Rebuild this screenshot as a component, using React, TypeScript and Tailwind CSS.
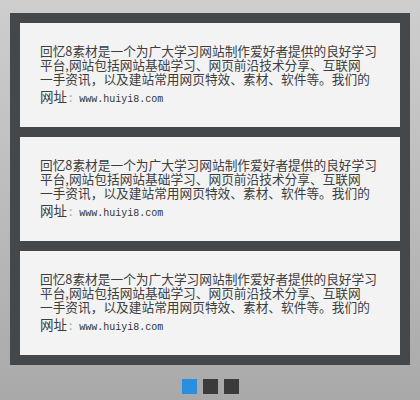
const LINES = [
  '回忆8素材是一个为广大学习网站制作爱好者提供的良好学习',
  '平台,网站包括网站基础学习、网页前沿技术分享、互联网',
  '一手资讯，以及建站常用网页特效、素材、软件等。我们的',
]

const CARDS = [1, 2, 3]

function Card() {
  return (
    <div className="h-[104px] bg-[#f3f3f3] pt-[21px] pl-5 text-[#3d3d3d] text-[12.7px] leading-[14px] font-['Noto_Sans_CJK_SC','Noto_Sans',sans-serif]">
      {LINES.map((l) => (
        <div key={l} className="whitespace-nowrap">{l}</div>
      ))}
      <div className="mt-[2px] whitespace-nowrap flex items-baseline leading-[16px]">
        <span className="text-[13.5px]">网址</span>
        <span className="text-[#9aa] text-[12px] ml-[2px] mr-[7px]">:</span>
        <span className="font-['Liberation_Mono',monospace] text-[10px] text-[#333]">www.huiyi8.com</span>
      </div>
    </div>
  )
}

export default function App() {
  return (
    <div className="w-[420px] h-[400px] overflow-hidden bg-gradient-to-b from-[#cecece] via-[#bcbcbc] to-[#a9a9a9] pt-[13px] px-[10px]">
      <div className="bg-[#45484b] p-[10px] flex flex-col gap-[10px]">
        {CARDS.map((c) => (
          <Card key={c} />
        ))}
      </div>
      <div className="flex justify-center gap-[6px] mt-[14px] pl-[1px]">
        <span className="w-[15px] h-[15px] bg-[#2a8fdd]" />
        <span className="w-[15px] h-[15px] bg-[#3b3b3b]" />
        <span className="w-[15px] h-[15px] bg-[#3b3b3b]" />
      </div>
    </div>
  )
}
